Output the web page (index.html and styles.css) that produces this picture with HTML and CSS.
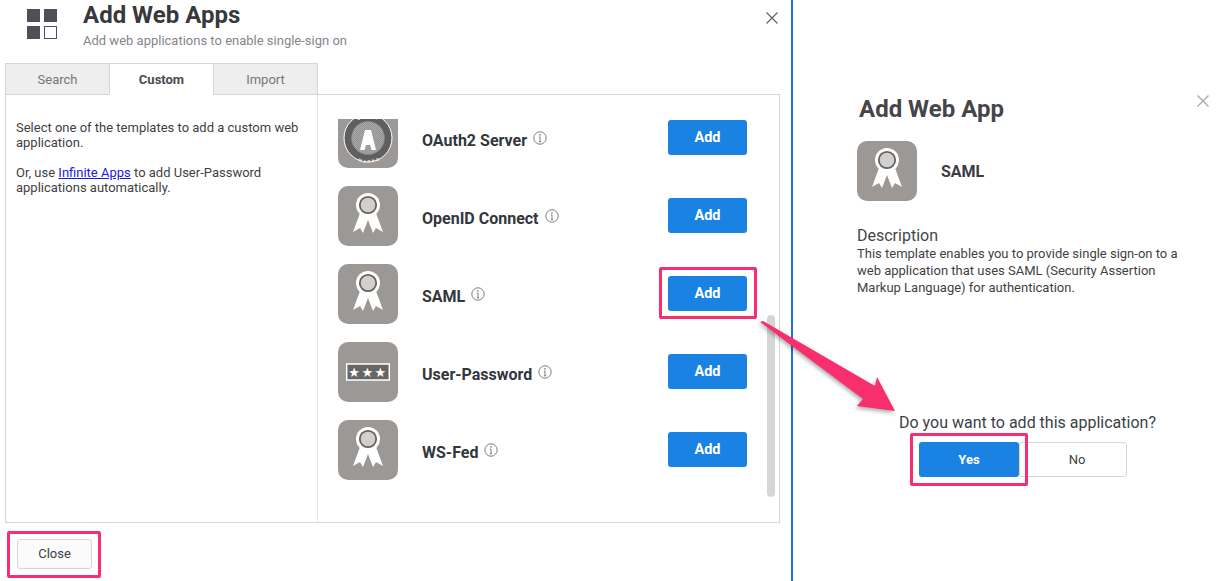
FILE: index.html
```html
<!DOCTYPE html>
<html lang="en">
<head>
<meta charset="utf-8">
<title>Add Web Apps</title>
<link rel="stylesheet" href="styles.css">
</head>
<body>
<svg class="defs" width="0" height="0" aria-hidden="true">
  <symbol id="award" viewBox="0 0 60 60">
    <rect width="60" height="60" rx="10" fill="#9b9895"/>
    <path d="M22 27 L15 46 L22 42 L25 47 L30 34 L35 47 L38 42 L45 46 L38 27 Z" fill="#fff"/>
    <circle cx="30" cy="19" r="12" fill="#fff"/>
    <circle cx="30" cy="19" r="8.200" fill="#d2d0ce" stroke="#636363" stroke-width="1.800"/>
  </symbol>
  <symbol id="info" viewBox="0 0 14 14">
    <circle cx="7" cy="7" r="6.200" fill="none" stroke="#7d7d7d" stroke-width="1"/>
    <path d="M7 6 V10.800 M5.800 10.800 H8.200 M5.900 6 H7" fill="none" stroke="#7d7d7d" stroke-width="1"/>
    <circle cx="7" cy="3.900" r=".8" fill="#7d7d7d"/>
  </symbol>
</svg>

<div class="page">
  <section class="left">
    <header class="head">
      <div class="grid-icon"><i></i><i></i><i></i><i class="open"></i></div>
      <div class="head-text">
        <h1>Add Web Apps</h1>
        <p>Add web applications to enable single-sign on</p>
      </div>
      <svg class="x x-dark" viewBox="0 0 12 12"><path d="M.5 .5 L11.500 11.500 M11.500 .5 L.5 11.500"/></svg>
    </header>

    <nav class="tabs">
      <div class="tab">Search</div>
      <div class="tab active">Custom</div>
      <div class="tab">Import</div>
    </nav>

    <div class="box">
      <div class="intro">
        <p>Select one of the templates to add a custom web application.</p>
        <p>Or, use <a href="#">Infinite Apps</a> to add User-Password applications automatically.</p>
      </div>
      <div class="list-wrap">
        <div class="list">
          <div class="row">
            <svg class="app" viewBox="0 0 60 60">
              <defs>
                <pattern id="check" width="2" height="2" patternUnits="userSpaceOnUse"><rect width="2" height="2" fill="#a8a8a8"/><rect width="1" height="1" fill="#949494"/><rect x="1" y="1" width="1" height="1" fill="#949494"/></pattern>
                <path id="ringtop" d="M10 30 A20 20 0 0 1 50 30"/>
                <path id="ringbot" d="M52 30 A22 22 0 0 1 8 30"/>
              </defs>
              <rect width="60" height="60" rx="10" fill="#9b9895"/>
              <circle cx="30" cy="30" r="24" fill="#5f5f5f" stroke="#fff" stroke-width="1"/>
              <circle cx="30" cy="30" r="16.500" fill="url(#check)" stroke="#8a8a8a" stroke-width=".6"/>
              <text class="ringtext"><textPath href="#ringtop" startOffset="50%" text-anchor="middle">OAUTH</textPath></text>
              <text class="ringtext"><textPath href="#ringbot" startOffset="50%" text-anchor="middle">OAUTH</textPath></text>
              <path d="M22 42 L27 22 H33 L38 42 H33.500 L32 37 H28 L26.500 42 Z" fill="#fff"/>
            </svg>
            <div class="name">OAuth2 Server<svg class="info"><use href="#info"/></svg></div>
            <button class="btn primary add">Add</button>
          </div>
          <div class="row">
            <svg class="app"><use href="#award"/></svg>
            <div class="name">OpenID Connect<svg class="info"><use href="#info"/></svg></div>
            <button class="btn primary add">Add</button>
          </div>
          <div class="row">
            <svg class="app"><use href="#award"/></svg>
            <div class="name">SAML<svg class="info"><use href="#info"/></svg></div>
            <span class="mark mark-add"><button class="btn primary add">Add</button></span>
          </div>
          <div class="row">
            <svg class="app" viewBox="0 0 60 60">
              <rect width="60" height="60" rx="10" fill="#9b9895"/>
              <rect x="8.700" y="22" width="42.600" height="16" fill="#666" stroke="#fff" stroke-width="1.500"/>
              <text class="stars" x="30" y="34.800" text-anchor="middle">★★★</text>
            </svg>
            <div class="name">User-Password<svg class="info"><use href="#info"/></svg></div>
            <button class="btn primary add">Add</button>
          </div>
          <div class="row">
            <svg class="app"><use href="#award"/></svg>
            <div class="name">WS-Fed<svg class="info"><use href="#info"/></svg></div>
            <button class="btn primary add">Add</button>
          </div>
        </div>
        <div class="scrollbar"></div>
      </div>
    </div>

    <footer class="foot">
      <span class="mark mark-close"><button class="btn plain close">Close</button></span>
    </footer>
  </section>

  <section class="right">
    <div class="right-head">
      <h2>Add Web App</h2>
      <svg class="x x-light" viewBox="0 0 12 12"><path d="M.5 .5 L11.500 11.500 M11.500 .5 L.5 11.500"/></svg>
    </div>
    <div class="app-line">
      <svg class="app"><use href="#award"/></svg>
      <strong>SAML</strong>
    </div>
    <h3>Description</h3>
    <p class="desc">This template enables you to provide single sign-on to a web application that uses SAML (Security Assertion Markup Language) for authentication.</p>
    <div class="confirm">
      <p>Do you want to add this application?</p>
      <div class="choices">
        <span class="mark mark-yes"><button class="btn primary yes">Yes</button></span>
        <button class="btn plain no">No</button>
      </div>
    </div>
  </section>
</div>

<svg class="arrow" viewBox="0 0 150 100" aria-hidden="true">
  <path d="M10 4 L13 3 L125 68 L127 59 L145 93 L107 88 L113 81 Z"/>
</svg>
</body>
</html>
```

FILE: styles.css
```css
* { box-sizing: border-box; }
html, body { margin: 0; padding: 0; }
body {
  position: relative;
  width: 1216px;
  height: 581px;
  overflow: hidden;
  background: #fff;
  font-family: Roboto, "Liberation Sans", sans-serif;
  color: #3b3b40;
}
.defs { position: absolute; }
.page { display: flex; height: 581px; }

/* left panel */
.left {
  width: 793px;
  flex: none;
  padding: 0 11px 0 5px;
  border-right: 2px solid #1f6fdc;
  display: flex;
  flex-direction: column;
}
.head { display: flex; height: 63px; padding-left: 22px; }
.grid-icon {
  width: 30px;
  height: 30px;
  margin-top: 9px;
  display: grid;
  grid-template-columns: 13px 13px;
  grid-auto-rows: 13px;
  gap: 4px;
}
.grid-icon i { background: #4f4f57; }
.grid-icon i.open { background: #fff; border: 1px solid #4b4b8c; }
.head-text { margin-left: 26px; flex: 1; }
h1 {
  margin: 0;
  font-size: 24px;
  line-height: 30px;
  font-weight: 700;
  color: #38383d;
}
.head-text p {
  margin: 3px 0 0;
  font-size: 13px;
  line-height: 16px;
  color: #85858a;
}
.x { width: 12px; height: 12px; fill: none; stroke-width: 1.300; flex: none; }
.x-dark { stroke: #5b6670; margin-top: 12px; margin-right: 2px; }
.x-light { stroke: #a4a8ab; margin-top: 1px; }

.tabs { display: flex; height: 32px; position: relative; z-index: 1; }
.tab {
  width: 105px;
  height: 32px;
  margin-right: -1px;
  border: 1px solid #d6d6d6;
  background: #eeeeee;
  color: #76767b;
  font-size: 13px;
  display: flex;
  align-items: center;
  justify-content: center;
}
.tab.active {
  background: #fff;
  border-bottom-color: #fff;
  color: #4a4a50;
  font-weight: 700;
}

.box {
  height: 429px;
  margin-top: -1px;
  border: 1px solid #d6d6d6;
  display: flex;
}
.intro {
  width: 312px;
  flex: none;
  padding: 25px 10px 0 10px;
  border-right: 1px dotted #d0d0d0;
  font-size: 13px;
  line-height: 15px;
  color: #3f3f44;
}
.intro p { margin: 0 0 15px; }
.intro a { color: #1a1ae0; }

.list-wrap { position: relative; flex: 1; padding-top: 24px; }
.list { height: 380px; overflow: hidden; padding-left: 20px; }
.row {
  display: flex;
  align-items: center;
  height: 60px;
  margin-bottom: 18px;
  position: relative;
}
.row:first-child { margin-top: -11px; }
.app { width: 60px; height: 60px; flex: none; }
.name {
  margin-left: 24px;
  padding-top: 4px;
  flex: 1;
  font-size: 16px;
  font-weight: 700;
  color: #33363d;
  display: flex;
  align-items: center;
}
.info { width: 14px; height: 14px; margin: -5px 0 0 6px; }
.ringtext { font: 700 4px Roboto, sans-serif; letter-spacing: 1.500px; fill: #fff; }
.stars { font: 13px "DejaVu Sans", sans-serif; letter-spacing: 1.500px; fill: #fff; }
.scrollbar {
  position: absolute;
  left: 449px;
  top: 220px;
  width: 8px;
  height: 182px;
  border-radius: 4px;
  background: #d6d6d6;
}

.btn {
  font-family: inherit;
  font-size: 13px;
  border-radius: 3px;
  display: block;
  padding: 0;
}
.primary {
  background: #1a82e2;
  border: 0;
  color: #fff;
  font-weight: 700;
}
.plain {
  background: #fff;
  border: 1px solid #d6d6d6;
  color: #3b3f46;
}
.add { width: 79px; height: 35px; margin: -1px 32px 0 0; font-size: 14.500px; }
.mark { position: relative; display: block; }
.mark::after {
  content: "";
  position: absolute;
  border: 3px solid #f92f6d;
  border-radius: 2px;
  pointer-events: none;
}
.mark-add::after { left: -9px; right: 22px; top: -10px; bottom: -8px; }

/* footer */
.foot { padding: 16px 0 0 12px; }
.close { width: 75px; height: 30px; padding-bottom: 2px; background: #fbfbfb; }
.mark-close { display: inline-block; }
.mark-close::after { left: -10px; right: -9px; top: -8px; bottom: -9px; }

/* right panel */
.right { flex: 1; padding: 0 7px 0 64px; }
.right-head {
  display: flex;
  justify-content: space-between;
  height: 141px;
  padding: 94px 0 0 2px;
}
h2 {
  margin: 0;
  font-size: 24px;
  line-height: 30px;
  font-weight: 700;
  color: #45454a;
}
.app-line { display: flex; align-items: center; height: 60px; }
.app-line strong { margin-left: 24px; font-size: 16px; font-weight: 700; color: #3b3b40; }
h3 {
  margin: 25px 0 0;
  font-size: 16px;
  line-height: 19px;
  font-weight: 400;
  color: #45454a;
}
.desc {
  margin: 0;
  width: 335px;
  font-size: 13px;
  line-height: 17px;
  color: #3f3f44;
}
.confirm { margin-top: 117px; margin-left: 42px; }
.confirm p {
  margin: 0;
  font-size: 16px;
  line-height: 19px;
  color: #3b3f46;
}
.choices { display: flex; margin: 10px 0 0 20px; }
.yes { width: 100px; height: 35px; }
.no { width: 108px; height: 35px; padding-left: 8px; }
.mark-yes::after { left: -9px; right: -9px; top: -9px; bottom: -9px; }

/* annotation arrow */
.arrow {
  position: absolute;
  left: 750px;
  top: 318px;
  width: 150px;
  height: 100px;
  fill: #f92f6d;
  filter: drop-shadow(-1px 2px 2px rgba(0, 0, 0, .35));
}
```
